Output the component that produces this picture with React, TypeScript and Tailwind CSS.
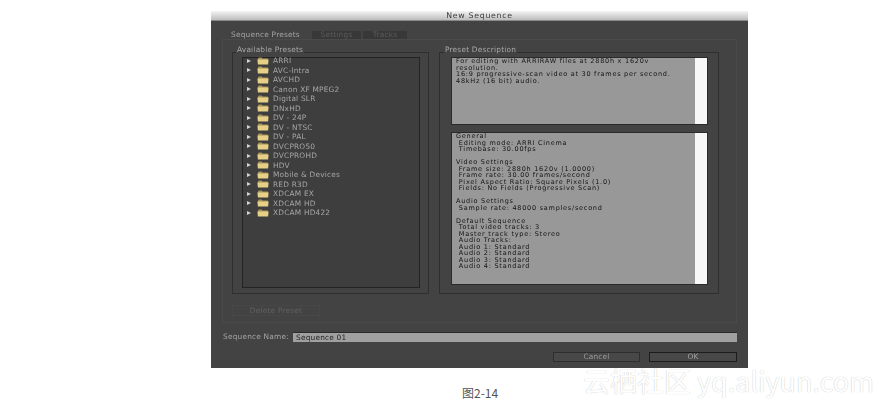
import React from 'react';

const presets = [
  'ARRI', 'AVC-Intra', 'AVCHD', 'Canon XF MPEG2', 'Digital SLR', 'DNxHD', 'DV - 24P', 'DV - NTSC', 'DV - PAL',
  'DVCPRO50', 'DVCPROHD', 'HDV', 'Mobile & Devices', 'RED R3D', 'XDCAM EX', 'XDCAM HD', 'XDCAM HD422',
];

const summary = [
  'General', ' Editing mode: ARRI Cinema', ' Timebase: 30.00fps', '',
  'Video Settings', ' Frame size: 2880h 1620v (1.0000)', ' Frame rate: 30.00 frames/second',
  ' Pixel Aspect Ratio: Square Pixels (1.0)', ' Fields: No Fields (Progressive Scan)', '',
  'Audio Settings', ' Sample rate: 48000 samples/second', '',
  'Default Sequence', ' Total video tracks: 3', ' Master track type: Stereo', ' Audio Tracks:',
  ' Audio 1: Standard', ' Audio 2: Standard', ' Audio 3: Standard', ' Audio 4: Standard',
];

const Folder = () => (
  <svg width="12" height="8" viewBox="0 0 12 8" className="block shrink-0">
    <path d="M1 1.5 L1.8 0.5 H4.6 L5.6 1.5 H10.8 V3 H1 Z" fill="#a8935a" />
    <path d="M0.4 2.6 H11.6 L11.1 7.6 H0.9 Z" fill="#e6cf86" />
  </svg>
);

const PresetRow = ({ name }: { name: string }) => (
  <div className="flex h-[9.5px] items-center">
    <span className="ml-[4px] h-0 w-0 shrink-0 border-y-[2.5px] border-l-[4px] border-y-transparent border-l-[#d0d0d0]" />
    <span className="ml-[6px]"><Folder /></span>
    <span className="ml-[4px] whitespace-pre leading-[9px] text-[#a6a6a6]">{name}</span>
  </div>
);

const TextBox = ({ className, lines }: { className: string; lines: string[] }) => (
  <div className={`flex w-[257px] border border-[#2a2a2a] bg-[#989898] ${className}`}>
    <div className="min-w-0 flex-1 whitespace-pre pl-[4px] text-[6.5px] leading-[6.5px] tracking-[0.75px] text-[#141414]">
      {lines.map((line, i) => (
        <div key={i} className="h-[6.5px]">{line}</div>
      ))}
    </div>
    <div className="w-[12px] bg-[#f7f7f7]" />
  </div>
);

export default function App() {
  return (
    <div className="relative h-[406px] w-[883px] overflow-hidden bg-white font-['DejaVu_Sans',sans-serif] text-[7.4px] tracking-[0.2px]">
      <div className="ml-[211px] pt-[11px]">
        <div className="flex h-[357px] w-[537px] flex-col bg-[#434343] blur-[0.4px]">
          {/* Title bar */}
          <div className="flex h-[10px] shrink-0 items-center justify-center border-b border-[#8a8a8a] bg-gradient-to-b from-[#f4f4f4] to-[#bdbdbd] pt-[1px] text-[7.8px] leading-none tracking-[0.7px] text-[#3a3a3a]">
            New Sequence
          </div>

          {/* Tabs */}
          <div className="ml-[12px] mt-[10px] flex h-[8px] shrink-0 items-center gap-[1px] leading-none">
            <div className="flex h-[8px] w-[88px] items-center pl-[8px] text-[#a4a4a4]">Sequence Presets</div>
            <div className="flex h-[8px] w-[49px] items-center justify-center bg-[#383838] text-[#5c5c5c]">Settings</div>
            <div className="ml-[1px] flex h-[8px] w-[44px] items-center justify-center bg-[#383838] text-[#5c5c5c]">Tracks</div>
          </div>

          {/* Tab panel */}
          <div className="ml-[11px] h-[284px] w-[515px] shrink-0 border border-[#4a4a4a]">
            <div className="ml-[9px] mt-[12px] flex gap-[10px]">
              <div className="relative h-[242px] w-[197px] border border-[#2f2f2f]">
                <span className="absolute -top-[7px] left-[3px] bg-[#434343] px-[1px] leading-[8px] text-[#a8a8a8]">Available Presets</span>
                <div className="ml-[9px] mt-[4px] h-[231px] w-[178px] border border-[#232323] bg-[#3e3e3e]">
                  <div className="-mt-[2px]">
                    {presets.map(p => <PresetRow key={p} name={p} />)}
                  </div>
                </div>
              </div>
              <div className="relative h-[242px] w-[280px] border border-[#2f2f2f]">
                <span className="absolute -top-[7px] left-[4px] bg-[#434343] px-[1px] leading-[8px] text-[#a8a8a8]">Preset Description</span>
                <TextBox
                  className="ml-[11px] mt-[4px] h-[68px]"
                  lines={['For editing with ARRIRAW files at 2880h x 1620v', 'resolution.', '16:9 progressive-scan video at 30 frames per second.', '48kHz (16 bit) audio.']}
                />
                <TextBox className="ml-[11px] mt-[7px] h-[153px]" lines={summary} />
              </div>
            </div>
            <div className="ml-[9px] mt-[11px] flex h-[11px] w-[88px] items-center justify-center border border-[#474747] leading-none text-[#616161]">
              Delete Preset
            </div>
          </div>

          {/* Sequence name */}
          <div className="mt-[9px] flex h-[10px] shrink-0 items-center pl-[12px]">
            <span className="w-[70px] leading-none text-[#a4a4a4]">Sequence Name:</span>
            <div className="flex h-[10px] w-[444px] items-center border-t border-[#2a2a2a] bg-[#a0a0a0] pl-[3px] leading-none text-[#1f1f1f]">
              Sequence 01
            </div>
          </div>

          {/* Buttons */}
          <div className="mt-[10px] flex shrink-0 justify-end gap-[9px] pr-[11px]">
            <div className="flex h-[10px] w-[87px] items-center justify-center border border-[#2e2e2e] bg-[#484848] leading-none text-[#9a9a9a]">Cancel</div>
            <div className="flex h-[10px] w-[88px] items-center justify-center border border-[#1c1c1c] bg-[#484848] leading-none text-[#a4a4a4]">OK</div>
          </div>
        </div>
      </div>

      {/* Caption */}
      <div className="absolute left-[462px] top-[386px] font-['Noto_Sans_CJK_SC','Noto_Sans',sans-serif] text-[12px] leading-[14px] tracking-normal text-[#555555]">
        图2-14
      </div>

      {/* Watermark */}
      <div className="absolute left-[583px] top-[365px] whitespace-nowrap font-['Noto_Sans_CJK_SC','Noto_Sans',sans-serif] text-[27px] leading-[32px] tracking-normal text-white [text-shadow:0_0_1px_#b5b5b5]">
        云栖社区 yq.aliyun.com
      </div>
    </div>
  );
}
